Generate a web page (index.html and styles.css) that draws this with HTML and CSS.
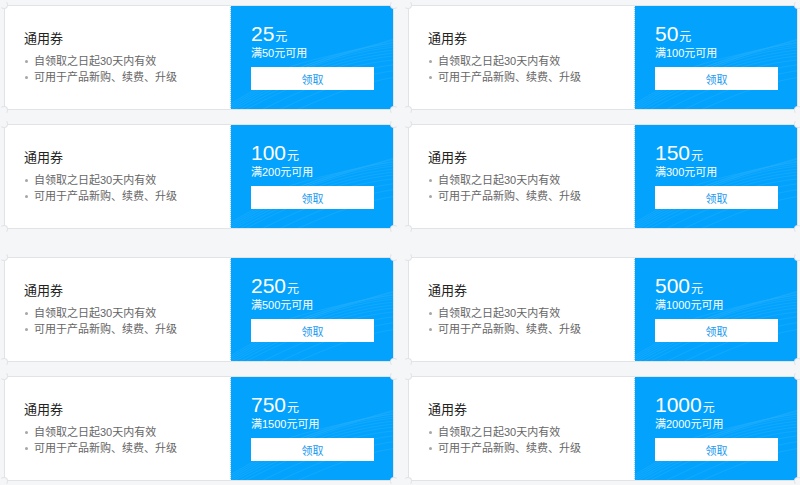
FILE: index.html
```html
<!DOCTYPE html>
<html lang="zh-CN">
<head>
<meta charset="utf-8">
<title>优惠券</title>
<link rel="stylesheet" href="styles.css">
</head>
<body>
<div class="group">
  <div class="coupon">
    <div class="info"><div class="title">通用券</div><ul><li>自领取之日起30天内有效</li><li>可用于产品新购、续费、升级</li></ul></div>
    <div class="value">
      <svg class="waves" viewBox="0 0 164 105" preserveAspectRatio="none"><g fill="none" stroke="#fff" stroke-width="0.5"><path d="M0 100 C50 70 100 45 164 38"/><path d="M0 102 C50 72 100 47 164 40"/><path d="M0 104 C50 74 100 49 164 42"/><path d="M0 106 C50 77 100 52 164 45"/><path d="M0 108 C50 80 100 55 164 48"/><path d="M0 111 C50 83 100 58 164 51"/><path d="M0 114 C50 87 100 62 164 55"/><path d="M10 117 C60 91 110 67 164 60"/><path d="M20 120 C70 96 115 73 164 66"/><path d="M30 122 C80 101 120 80 164 73"/><path d="M60 62 C90 52 130 44 164 37"/><path d="M40 77 C80 60 120 47 164 34"/><path d="M50 70 C85 56 125 45 164 35"/></g></svg>
      <div class="amount"><span class="num">25</span><span class="unit">元</span></div>
      <div class="cond">满50元可用</div>
      <button class="get">领取</button>
    </div>
    <i class="notch tl"></i><i class="notch tr"></i><i class="notch bl"></i><i class="notch br"></i>
  </div>
  <div class="coupon">
    <div class="info"><div class="title">通用券</div><ul><li>自领取之日起30天内有效</li><li>可用于产品新购、续费、升级</li></ul></div>
    <div class="value">
      <svg class="waves" viewBox="0 0 164 105" preserveAspectRatio="none"><g fill="none" stroke="#fff" stroke-width="0.5"><path d="M0 100 C50 70 100 45 164 38"/><path d="M0 102 C50 72 100 47 164 40"/><path d="M0 104 C50 74 100 49 164 42"/><path d="M0 106 C50 77 100 52 164 45"/><path d="M0 108 C50 80 100 55 164 48"/><path d="M0 111 C50 83 100 58 164 51"/><path d="M0 114 C50 87 100 62 164 55"/><path d="M10 117 C60 91 110 67 164 60"/><path d="M20 120 C70 96 115 73 164 66"/><path d="M30 122 C80 101 120 80 164 73"/><path d="M60 62 C90 52 130 44 164 37"/><path d="M40 77 C80 60 120 47 164 34"/><path d="M50 70 C85 56 125 45 164 35"/></g></svg>
      <div class="amount"><span class="num">50</span><span class="unit">元</span></div>
      <div class="cond">满100元可用</div>
      <button class="get">领取</button>
    </div>
    <i class="notch tl"></i><i class="notch tr"></i><i class="notch bl"></i><i class="notch br"></i>
  </div>
  <div class="coupon">
    <div class="info"><div class="title">通用券</div><ul><li>自领取之日起30天内有效</li><li>可用于产品新购、续费、升级</li></ul></div>
    <div class="value">
      <svg class="waves" viewBox="0 0 164 105" preserveAspectRatio="none"><g fill="none" stroke="#fff" stroke-width="0.5"><path d="M0 100 C50 70 100 45 164 38"/><path d="M0 102 C50 72 100 47 164 40"/><path d="M0 104 C50 74 100 49 164 42"/><path d="M0 106 C50 77 100 52 164 45"/><path d="M0 108 C50 80 100 55 164 48"/><path d="M0 111 C50 83 100 58 164 51"/><path d="M0 114 C50 87 100 62 164 55"/><path d="M10 117 C60 91 110 67 164 60"/><path d="M20 120 C70 96 115 73 164 66"/><path d="M30 122 C80 101 120 80 164 73"/><path d="M60 62 C90 52 130 44 164 37"/><path d="M40 77 C80 60 120 47 164 34"/><path d="M50 70 C85 56 125 45 164 35"/></g></svg>
      <div class="amount"><span class="num">100</span><span class="unit">元</span></div>
      <div class="cond">满200元可用</div>
      <button class="get">领取</button>
    </div>
    <i class="notch tl"></i><i class="notch tr"></i><i class="notch bl"></i><i class="notch br"></i>
  </div>
  <div class="coupon">
    <div class="info"><div class="title">通用券</div><ul><li>自领取之日起30天内有效</li><li>可用于产品新购、续费、升级</li></ul></div>
    <div class="value">
      <svg class="waves" viewBox="0 0 164 105" preserveAspectRatio="none"><g fill="none" stroke="#fff" stroke-width="0.5"><path d="M0 100 C50 70 100 45 164 38"/><path d="M0 102 C50 72 100 47 164 40"/><path d="M0 104 C50 74 100 49 164 42"/><path d="M0 106 C50 77 100 52 164 45"/><path d="M0 108 C50 80 100 55 164 48"/><path d="M0 111 C50 83 100 58 164 51"/><path d="M0 114 C50 87 100 62 164 55"/><path d="M10 117 C60 91 110 67 164 60"/><path d="M20 120 C70 96 115 73 164 66"/><path d="M30 122 C80 101 120 80 164 73"/><path d="M60 62 C90 52 130 44 164 37"/><path d="M40 77 C80 60 120 47 164 34"/><path d="M50 70 C85 56 125 45 164 35"/></g></svg>
      <div class="amount"><span class="num">150</span><span class="unit">元</span></div>
      <div class="cond">满300元可用</div>
      <button class="get">领取</button>
    </div>
    <i class="notch tl"></i><i class="notch tr"></i><i class="notch bl"></i><i class="notch br"></i>
  </div>
</div>
<div class="group">
  <div class="coupon">
    <div class="info"><div class="title">通用券</div><ul><li>自领取之日起30天内有效</li><li>可用于产品新购、续费、升级</li></ul></div>
    <div class="value">
      <svg class="waves" viewBox="0 0 164 105" preserveAspectRatio="none"><g fill="none" stroke="#fff" stroke-width="0.5"><path d="M0 100 C50 70 100 45 164 38"/><path d="M0 102 C50 72 100 47 164 40"/><path d="M0 104 C50 74 100 49 164 42"/><path d="M0 106 C50 77 100 52 164 45"/><path d="M0 108 C50 80 100 55 164 48"/><path d="M0 111 C50 83 100 58 164 51"/><path d="M0 114 C50 87 100 62 164 55"/><path d="M10 117 C60 91 110 67 164 60"/><path d="M20 120 C70 96 115 73 164 66"/><path d="M30 122 C80 101 120 80 164 73"/><path d="M60 62 C90 52 130 44 164 37"/><path d="M40 77 C80 60 120 47 164 34"/><path d="M50 70 C85 56 125 45 164 35"/></g></svg>
      <div class="amount"><span class="num">250</span><span class="unit">元</span></div>
      <div class="cond">满500元可用</div>
      <button class="get">领取</button>
    </div>
    <i class="notch tl"></i><i class="notch tr"></i><i class="notch bl"></i><i class="notch br"></i>
  </div>
  <div class="coupon">
    <div class="info"><div class="title">通用券</div><ul><li>自领取之日起30天内有效</li><li>可用于产品新购、续费、升级</li></ul></div>
    <div class="value">
      <svg class="waves" viewBox="0 0 164 105" preserveAspectRatio="none"><g fill="none" stroke="#fff" stroke-width="0.5"><path d="M0 100 C50 70 100 45 164 38"/><path d="M0 102 C50 72 100 47 164 40"/><path d="M0 104 C50 74 100 49 164 42"/><path d="M0 106 C50 77 100 52 164 45"/><path d="M0 108 C50 80 100 55 164 48"/><path d="M0 111 C50 83 100 58 164 51"/><path d="M0 114 C50 87 100 62 164 55"/><path d="M10 117 C60 91 110 67 164 60"/><path d="M20 120 C70 96 115 73 164 66"/><path d="M30 122 C80 101 120 80 164 73"/><path d="M60 62 C90 52 130 44 164 37"/><path d="M40 77 C80 60 120 47 164 34"/><path d="M50 70 C85 56 125 45 164 35"/></g></svg>
      <div class="amount"><span class="num">500</span><span class="unit">元</span></div>
      <div class="cond">满1000元可用</div>
      <button class="get">领取</button>
    </div>
    <i class="notch tl"></i><i class="notch tr"></i><i class="notch bl"></i><i class="notch br"></i>
  </div>
  <div class="coupon">
    <div class="info"><div class="title">通用券</div><ul><li>自领取之日起30天内有效</li><li>可用于产品新购、续费、升级</li></ul></div>
    <div class="value">
      <svg class="waves" viewBox="0 0 164 105" preserveAspectRatio="none"><g fill="none" stroke="#fff" stroke-width="0.5"><path d="M0 100 C50 70 100 45 164 38"/><path d="M0 102 C50 72 100 47 164 40"/><path d="M0 104 C50 74 100 49 164 42"/><path d="M0 106 C50 77 100 52 164 45"/><path d="M0 108 C50 80 100 55 164 48"/><path d="M0 111 C50 83 100 58 164 51"/><path d="M0 114 C50 87 100 62 164 55"/><path d="M10 117 C60 91 110 67 164 60"/><path d="M20 120 C70 96 115 73 164 66"/><path d="M30 122 C80 101 120 80 164 73"/><path d="M60 62 C90 52 130 44 164 37"/><path d="M40 77 C80 60 120 47 164 34"/><path d="M50 70 C85 56 125 45 164 35"/></g></svg>
      <div class="amount"><span class="num">750</span><span class="unit">元</span></div>
      <div class="cond">满1500元可用</div>
      <button class="get">领取</button>
    </div>
    <i class="notch tl"></i><i class="notch tr"></i><i class="notch bl"></i><i class="notch br"></i>
  </div>
  <div class="coupon">
    <div class="info"><div class="title">通用券</div><ul><li>自领取之日起30天内有效</li><li>可用于产品新购、续费、升级</li></ul></div>
    <div class="value">
      <svg class="waves" viewBox="0 0 164 105" preserveAspectRatio="none"><g fill="none" stroke="#fff" stroke-width="0.5"><path d="M0 100 C50 70 100 45 164 38"/><path d="M0 102 C50 72 100 47 164 40"/><path d="M0 104 C50 74 100 49 164 42"/><path d="M0 106 C50 77 100 52 164 45"/><path d="M0 108 C50 80 100 55 164 48"/><path d="M0 111 C50 83 100 58 164 51"/><path d="M0 114 C50 87 100 62 164 55"/><path d="M10 117 C60 91 110 67 164 60"/><path d="M20 120 C70 96 115 73 164 66"/><path d="M30 122 C80 101 120 80 164 73"/><path d="M60 62 C90 52 130 44 164 37"/><path d="M40 77 C80 60 120 47 164 34"/><path d="M50 70 C85 56 125 45 164 35"/></g></svg>
      <div class="amount"><span class="num">1000</span><span class="unit">元</span></div>
      <div class="cond">满2000元可用</div>
      <button class="get">领取</button>
    </div>
    <i class="notch tl"></i><i class="notch tr"></i><i class="notch bl"></i><i class="notch br"></i>
  </div>
</div>
</body>
</html>
```

FILE: styles.css
```css
* { box-sizing: border-box; }
html, body { margin: 0; }
body {
  background: #f5f6f8;
  padding: 5px 2px 0 4px;
  font-family: "Liberation Sans", "Noto Sans CJK SC", sans-serif;
}
.group {
  display: grid;
  grid-template-columns: 390px 390px;
  column-gap: 14px;
  row-gap: 14px;
  margin-bottom: 28px;
}
.coupon {
  position: relative;
  display: flex;
  height: 105px;
  border: 1px solid #e2e3e6;
  background: #fff;
}
.info {
  width: 225px;
  display: flex;
  flex-direction: column;
  justify-content: center;
  padding-left: 19px;
}
.title {
  font-size: 13px;
  line-height: 18px;
  color: #222;
  margin-bottom: 5px;
}
.info ul {
  margin: 0;
  padding: 0;
  list-style: none;
}
.info li {
  position: relative;
  font-size: 11px;
  line-height: 16px;
  color: #666;
  padding-left: 10px;
}
.info li::before {
  content: "";
  position: absolute;
  left: 1px;
  top: 7px;
  width: 3px;
  height: 3px;
  border-radius: 50%;
  background: #a6a6a6;
}
.value {
  position: relative;
  flex: 1;
  background: #03a3fd;
  padding: 0 19px 3px 21px;
  display: flex;
  flex-direction: column;
  justify-content: center;
  color: #fff;
  overflow: hidden;
}
.value::before {
  content: "";
  position: absolute;
  left: 0;
  top: 0;
  bottom: 0;
  width: 1px;
  background: repeating-linear-gradient(to bottom, #fff 0 1px, #7fd0fe 1px 2px);
}
.waves {
  position: absolute;
  left: 0;
  top: 0;
  width: 100%;
  height: 100%;
  opacity: 0.13;
}
.amount, .cond, .get { position: relative; }
.amount {
  line-height: 24px;
  height: 24px;
}
.num {
  font-size: 21px;
}
.unit {
  font-size: 12px;
  margin-left: 1px;
}
.cond {
  font-size: 11px;
  line-height: 14px;
}
.get {
  margin-top: 7px;
  height: 23px;
  width: 123px;
  border: 0;
  background: #fff;
  color: #1d9bf0;
  font-family: "Liberation Sans", "Noto Sans CJK SC", sans-serif;
  font-size: 11px;
  padding: 0;
}
.notch {
  position: absolute;
  width: 8px;
  height: 8px;
  border-radius: 50%;
  background: #f5f6f8;
  border: 1px solid transparent;
  z-index: 2;
}
.tl { top: -5px; left: -5px; border-right-color: #e2e3e6; border-bottom-color: #e2e3e6; }
.tr { top: -5px; right: -5px; border-left-color: #e2e3e6; border-bottom-color: #e2e3e6; }
.bl { bottom: -5px; left: -5px; border-right-color: #e2e3e6; border-top-color: #e2e3e6; }
.br { bottom: -5px; right: -5px; border-left-color: #e2e3e6; border-top-color: #e2e3e6; }
```
